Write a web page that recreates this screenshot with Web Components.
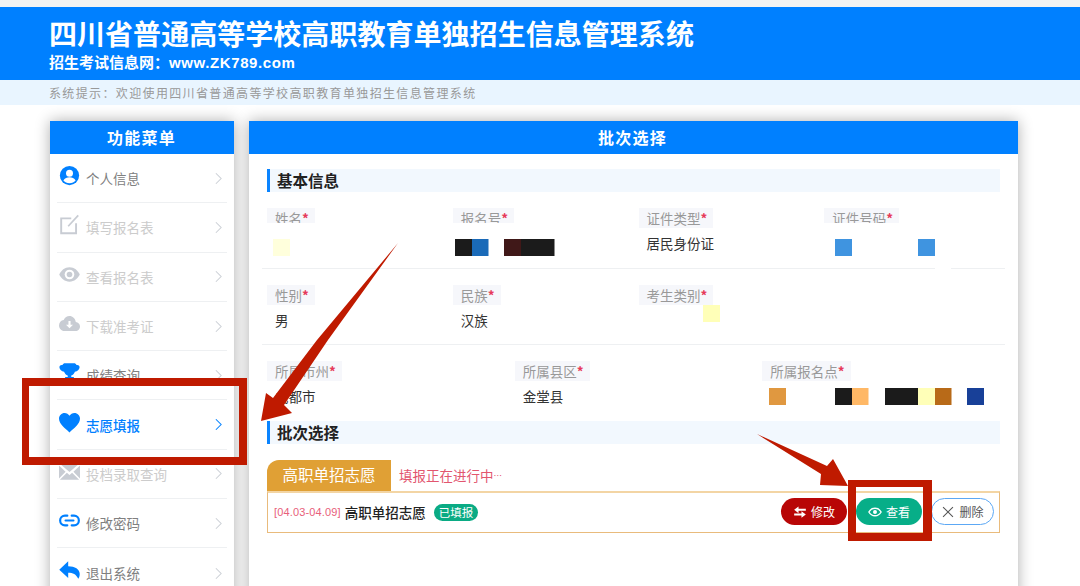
<!DOCTYPE html>
<html lang="zh">
<head>
<meta charset="utf-8">
<title>批次选择</title>
<style>
html,body{margin:0;height:586px;overflow:hidden;background:#fff;font-family:"Noto Sans CJK SC","Liberation Sans",sans-serif;}
</style>
</head>
<body>
<exam-page>
	<exam-header slot="header" title-text="四川省普通高等学校高职教育单独招生信息管理系统" sub-text="招生考试信息网：" site="www.ZK789.com"></exam-header>
	<tip-bar slot="header">系统提示：欢迎使用四川省普通高等学校高职教育单独招生信息管理系统</tip-bar>
	<side-menu slot="side">
		<menu-item icon="person" state="on">个人信息</menu-item>
		<menu-item icon="edit" state="off">填写报名表</menu-item>
		<menu-item icon="eye" state="off">查看报名表</menu-item>
		<menu-item icon="cloud" state="off">下载准考证</menu-item>
		<menu-item icon="trophy" state="on">成绩查询</menu-item>
		<menu-item icon="heart" state="active">志愿填报</menu-item>
		<menu-item icon="mail" state="off">投档录取查询</menu-item>
		<menu-item icon="link" state="on">修改密码</menu-item>
		<menu-item icon="reply" state="on" last>退出系统</menu-item>
	</side-menu>
	<batch-panel slot="main">
		<section-title>基本信息</section-title>
		<field-row cols="4" line>
			<info-field label="姓名"></info-field>
			<info-field label="报名号"></info-field>
			<info-field label="证件类型">居民身份证</info-field>
			<info-field label="证件号码"></info-field>
		</field-row>
		<field-row cols="4" line>
			<info-field label="性别">男</info-field>
			<info-field label="民族">汉族</info-field>
			<info-field label="考生类别"></info-field>
		</field-row>
		<field-row cols="3">
			<info-field label="所属市州">成都市</info-field>
			<info-field label="所属县区">金堂县</info-field>
			<info-field label="所属报名点"></info-field>
		</field-row>
		<section-title>批次选择</section-title>
		<batch-box tab="高职单招志愿" note="填报正在进行中" dates="[04.03-04.09]" name="高职单招志愿" badge="已填报">
			<round-button kind="edit" icon="swap">修改</round-button>
			<round-button kind="view" icon="eye">查看</round-button>
			<round-button kind="del" icon="close">删除</round-button>
		</batch-box>
	</batch-panel>
	<photo-marks slot="marks"></photo-marks>
</exam-page>

<script>
const menuIcons={
	person:`<circle cx="12" cy="12" r="11" fill="currentColor"/><circle cx="12" cy="9.300" r="4" fill="#fff"/><path fill="#fff" d="M5 17.800c1.400-2.800 4.200-3.800 7-3.800s5.600 1 7 3.800c-1.500 1.800-4.100 3-7 3s-5.500-1.200-7-3z"/>`,
	edit:`<path fill="none" stroke="currentColor" stroke-width="2.200" d="M14 5H2.500v17h17V10.500"/><path fill="none" stroke="currentColor" stroke-width="2" d="M10.500 14 22 1.500"/>`,
	eye:`<path fill="currentColor" d="M12 3.800C6.500 3.800 2.400 7.500.3 12c2.100 4.500 6.200 8.200 11.700 8.200S21.600 16.500 23.700 12C21.600 7.500 17.500 3.800 12 3.800z"/><circle cx="12" cy="12" r="5.500" fill="#fff"/><circle cx="12" cy="12" r="3.200" fill="currentColor"/>`,
	cloud:`<path fill="currentColor" d="M19.200 10.200C18.500 6.300 15.500 3.500 12 3.500 9.100 3.500 6.600 5.300 5.400 8 2.300 8.300 0 10.900 0 14.200c0 3.300 2.700 6.300 6 6.300h13c2.800 0 5-2.400 5-5.200 0-2.700-2.100-4.900-4.800-5.100z"/><path fill="#fff" d="M10.800 9h2.400v4.500H16L12 17.500 8 13.500h2.800z"/>`,
	trophy:`<path fill="currentColor" d="M7 1.500h10c1.500 0 2.500.7 3 2 2.200-.5 3.700.8 3.500 2.800-.3 2.600-2.400 4.500-5.300 4.700-.9 2.300-2.300 3.700-4.200 4.300V17h3v3.500H7V17h3v-1.700c-1.900-.6-3.300-2-4.200-4.300C2.900 10.800.8 8.900.5 6.300.3 4.300 1.800 3 4 3.500c.5-1.300 1.500-2 3-2z"/>`,
	heart:`<path fill="currentColor" d="M12 23.300C7 18.800 0 14 0 7.500 0 3.800 2.900 1 6.400 1 8.700 1 10.800 2.200 12 4.300 13.200 2.200 15.300 1 17.600 1 21.100 1 24 3.800 24 7.500 24 14 17 18.800 12 23.300z"/>`,
	mail:`<path fill="currentColor" d="M1 3 12 12.500 23 3zM0 5V20l7.500-7.700zM24 5V20l-7.500-7.700zM9 13.500l3 2.500 3-2.500 8 8H1z"/>`,
	link:`<path fill="none" stroke="currentColor" stroke-width="2.500" stroke-linecap="round" d="M9.500 6.500H6.800a5.500 5.500 0 0 0 0 11h2.700M14.500 6.500h2.700a5.500 5.500 0 0 1 0 11h-2.700M7.500 12h9"/>`,
	reply:`<path fill="currentColor" d="M10.500 1.500 .3 11l10.200 9.500v-6c5.500 0 9 1.500 11.500 7 .8-1 1.700-2.800 1.700-5.500 0-5.500-5.500-8.800-13.200-8.800z"/>`
};

class ExamPage extends HTMLElement{
	constructor(){
		super();
		this.attachShadow({mode:'open'}).innerHTML=`
<style>
:host{display:block;position:relative;width:1080px;height:586px;overflow:hidden;background:#fff;}
.strip{height:7px;background:#f3f3f3;}
.body{display:flex;gap:15px;height:481px;padding:16px 62px 0 50px;box-sizing:border-box;}
.side{flex:0 0 184px;display:block;}
.main{flex:1;min-width:0;}
</style>
<div class="strip"></div>
<slot name="header"></slot>
<div class="body">
	<div class="side"><slot name="side"></slot></div>
	<div class="main"><slot name="main"></slot></div>
</div>
<slot name="marks"></slot>`;
	}
}
customElements.define('exam-page',ExamPage);

class ExamHeader extends HTMLElement{
	constructor(){
		super();
		this.attachShadow({mode:'open'});
	}
	connectedCallback(){
		this.shadowRoot.innerHTML=`
<style>
:host{display:block;height:73px;padding:13px 0 0 49px;background:#0080ff;color:#fff;font-weight:700;box-sizing:border-box;font-family:"Liberation Sans","Noto Sans CJK SC",sans-serif;}
.t{font-size:28px;line-height:32px;letter-spacing:.04px;}
.s{font-size:15px;line-height:18px;margin-top:2px;}
.s span{letter-spacing:.6px;}
</style>
<div class="t">${this.getAttribute('title-text')}</div>
<div class="s">${this.getAttribute('sub-text')}<span>${this.getAttribute('site')}</span></div>`;
	}
}
customElements.define('exam-header',ExamHeader);

class TipBar extends HTMLElement{
	constructor(){
		super();
		this.attachShadow({mode:'open'}).innerHTML=`
<style>
:host{display:block;height:25px;padding-left:49px;background:#e9f5ff;color:#999;font-size:12px;line-height:25px;letter-spacing:1.360px;white-space:nowrap;}
</style>
<slot></slot>`;
	}
}
customElements.define('tip-bar',TipBar);

class SideMenu extends HTMLElement{
	constructor(){
		super();
		this.attachShadow({mode:'open'}).innerHTML=`
<style>
:host{display:block;height:480px;background:#fff;box-shadow:0 0 14px rgba(0,0,0,.32);}
h2{margin:0;height:33px;padding-right:1px;background:#0080ff;color:#fff;font-size:16px;line-height:32px;font-weight:700;text-align:center;letter-spacing:1.300px;}
.list{padding:0 7px;}
</style>
<h2>功能菜单</h2>
<div class="list"><slot></slot></div>`;
	}
}
customElements.define('side-menu',SideMenu);

class MenuItem extends HTMLElement{
	constructor(){
		super();
		this.attachShadow({mode:'open'});
	}
	connectedCallback(){
		const icon=menuIcons[this.getAttribute('icon')];
		this.shadowRoot.innerHTML=`
<style>
:host{display:flex;align-items:center;height:49.300px;box-sizing:border-box;border-bottom:1px solid #eef0f2;font-size:13.500px;color:#808080;}
:host([last]){border-bottom:0;}
:host([state=off]){color:#ccc;}
:host([state=active]){color:#0080ff;font-weight:500;}
svg.i{width:21px;height:21px;margin:-5px 6px 0 2px;flex:none;color:#0080ff;}
:host([state=off]) svg.i{color:#c8ccd3;}
.label{flex:1;white-space:nowrap;}
svg.c{width:7px;height:13px;margin-right:5px;flex:none;color:#ccd0d6;}
:host([state=active]) svg.c{color:#0080ff;}
</style>
<svg class="i" viewBox="0 0 24 24">${icon}</svg>
<span class="label"><slot></slot></span>
<svg class="c" viewBox="0 0 8 14"><path fill="none" stroke="currentColor" stroke-width="1.200" d="M1 1l6 6-6 6"/></svg>`;
	}
}
customElements.define('menu-item',MenuItem);

class BatchPanel extends HTMLElement{
	constructor(){
		super();
		this.attachShadow({mode:'open'}).innerHTML=`
<style>
:host{display:block;height:480px;background:#fff;box-shadow:0 0 14px rgba(0,0,0,.32);}
h2{margin:0;height:33px;padding-right:2px;background:#0080ff;color:#fff;font-size:16px;line-height:32px;font-weight:700;text-align:center;letter-spacing:1.300px;}
.content{padding:15px 18px 0;}
</style>
<h2>批次选择</h2>
<div class="content"><slot></slot></div>`;
	}
}
customElements.define('batch-panel',BatchPanel);

class SectionTitle extends HTMLElement{
	constructor(){
		super();
		this.attachShadow({mode:'open'}).innerHTML=`
<style>
:host{display:block;height:23px;padding-left:7px;background:#f2f8fe;border-left:3px solid #0a84ff;color:#222;font-size:15.500px;font-weight:700;line-height:22px;}
</style>
<slot></slot>`;
	}
}
customElements.define('section-title',SectionTitle);

class FieldRow extends HTMLElement{
	constructor(){
		super();
		this.attachShadow({mode:'open'});
	}
	connectedCallback(){
		this.shadowRoot.innerHTML=`
<style>
:host{display:grid;grid-template-columns:repeat(${this.getAttribute('cols')},1fr);margin:0 -5px;height:76.500px;box-sizing:border-box;padding-top:16px;}
:host([line]){border-bottom:1px solid #eef0f2;}
:host([cols="3"]){height:76px;}
</style>
<slot></slot>`;
	}
}
customElements.define('field-row',FieldRow);

class InfoField extends HTMLElement{
	constructor(){
		super();
		this.attachShadow({mode:'open'});
	}
	connectedCallback(){
		this.shadowRoot.innerHTML=`
<style>
:host{display:block;padding-left:5px;min-width:0;}
.top{height:20px;}
.label{display:inline-block;height:20px;padding:0 6px 0 8px;background:#f6f7fb;color:#999;font-size:13.500px;line-height:20px;vertical-align:top;}
.label b{color:#e63a5a;font-weight:700;font-size:13.500px;}
.value{height:32px;padding-left:8px;color:#333;font-size:13.500px;line-height:30px;}
</style>
<div class="top"><span class="label">${this.getAttribute('label')}<b>*</b></span></div>
<div class="value"><slot></slot></div>`;
	}
}
customElements.define('info-field',InfoField);

class BatchBox extends HTMLElement{
	constructor(){
		super();
		this.attachShadow({mode:'open'});
	}
	connectedCallback(){
		this.shadowRoot.innerHTML=`
<style>
:host{display:block;margin-top:16px;}
.head{display:flex;align-items:center;height:31px;}
.tab{width:124px;height:31px;background:#e0a035;border-radius:12px 0 0 0;color:#fff;font-size:15.500px;line-height:29px;text-align:center;}
.note{margin-left:8px;color:#e2566f;font-size:13.500px;line-height:30px;height:31px;white-space:nowrap;}
.dots{font-size:8.500px;position:relative;top:-2px;}
.row{display:flex;align-items:center;height:42px;box-sizing:border-box;padding:0 5px 0 6px;border:1px solid #e9bb7c;border-top:2px solid #f3d5a4;}
.dates{color:#e8607a;font:11px "Liberation Sans",sans-serif;letter-spacing:.15px;margin-top:-1px;}
.name{margin-left:4px;color:#222;font-size:13.500px;font-weight:500;margin-top:-1px;}
.badge{margin-left:8px;padding:0 5px;height:17px;border-radius:9px;background:#0aab84;color:#fff;font-size:11.500px;line-height:17px;margin-top:-1px;}
.acts{margin-left:auto;display:flex;gap:9px;margin-top:-2px;}
</style>
<div class="head"><span class="tab">${this.getAttribute('tab')}</span><span class="note">${this.getAttribute('note')}<span class="dots">…</span></span></div>
<div class="row">
	<span class="dates">${this.getAttribute('dates')}</span>
	<span class="name">${this.getAttribute('name')}</span>
	<span class="badge">${this.getAttribute('badge')}</span>
	<span class="acts"><slot></slot></span>
</div>`;
	}
}
customElements.define('batch-box',BatchBox);

const buttonIcons={
	swap:`<path fill="currentColor" d="M9.500 2.500v4H22V10H9.500v4L2 8.200zM14.500 10.500l7.500 5.800-7.500 5.700v-4H2v-3.500h12.500z"/>`,
	eye:`<path fill="none" stroke="currentColor" stroke-width="2.400" d="M1.500 12C4 7.500 7.500 5.500 12 5.500s8 2 10.500 6.500c-2.500 4.500-6 6.500-10.500 6.500S4 16.500 1.500 12z"/><circle cx="12" cy="12" r="3.400" fill="currentColor"/>`,
	close:`<path fill="none" stroke="currentColor" stroke-width="1.800" d="M3.500 3.500l17 17M20.500 3.500l-17 17"/>`
};
class RoundButton extends HTMLElement{
	constructor(){
		super();
		this.attachShadow({mode:'open'});
	}
	connectedCallback(){
		this.shadowRoot.innerHTML=`
<style>
:host{display:inline-flex;align-items:center;justify-content:center;gap:4px;width:66px;height:27px;box-sizing:border-box;border-radius:14px;color:#fff;font-size:12px;white-space:nowrap;}
:host([kind=edit]){background:#b80606;}
:host([kind=view]){background:#07ae88;}
:host([kind=del]){width:63px;background:#fff;border:1px solid #5ca8f5;color:#555;}
svg{width:14px;height:14px;flex:none;}
</style>
<svg viewBox="0 0 24 24">${buttonIcons[this.getAttribute('icon')]}</svg><slot></slot>`;
	}
}
customElements.define('round-button',RoundButton);

// what was pasted over the screenshot: arrows, frames, mosaic and white patches
class PhotoMarks extends HTMLElement{
	constructor(){
		super();
		const cells=[
			[273,239,17,'#ffffdc'],
			[455,239,17,'#1b1b1b'],[472,239,16.500,'#1a6ab8'],[504,239,17,'#401818'],[521,239,33.500,'#1b1b1b'],
			[835,239,17,'#3f94e0'],[918,239,17,'#3f94e0'],
			[703,305,17,'#ffffb8'],
			[769,388,17,'#e09840'],[835,388,17,'#1b1b1b'],[852,388,16.500,'#ffb866'],[885,388,33,'#1b1b1b'],
			[918,388,17,'#ffffb8'],[935,388,16.500,'#b86a18'],[967,388,17,'#184098']
		].map(c=>`<rect x="${c[0]}" y="${c[1]}" width="${c[2]}" height="17" fill="${c[3]}"/>`).join('');
		this.attachShadow({mode:'open'}).innerHTML=`
<style>
:host{display:block;position:absolute;left:0;top:0;width:1080px;height:586px;pointer-events:none;}
svg{display:block;}
</style>
<svg width="1080" height="586" viewBox="0 0 1080 586">
	<g fill="#fff">
		<rect x="262" y="223" width="140" height="16"/>
		<rect x="453" y="223" width="110" height="16"/>
		<rect x="820" y="223" width="90" height="16"/>
		<rect x="935" y="258" width="16" height="18"/>
	</g>
	${cells}
	<g fill="#bf1a00">
		<polygon points="398,243 328,340 284,405 292,413 261,421 266,393 273,398 317,340"/>
		<polygon points="757,434 827,466 833,459 848,486 820,485 821,474"/>
		<path fill-rule="evenodd" d="M22 378H247V465H22zM29 386V457H239V386z"/>
		<path fill-rule="evenodd" d="M848 480H932V541H848zM856 487V533H923V487z"/>
	</g>
</svg>`;
	}
}
customElements.define('photo-marks',PhotoMarks);
</script>
</body>
</html>
